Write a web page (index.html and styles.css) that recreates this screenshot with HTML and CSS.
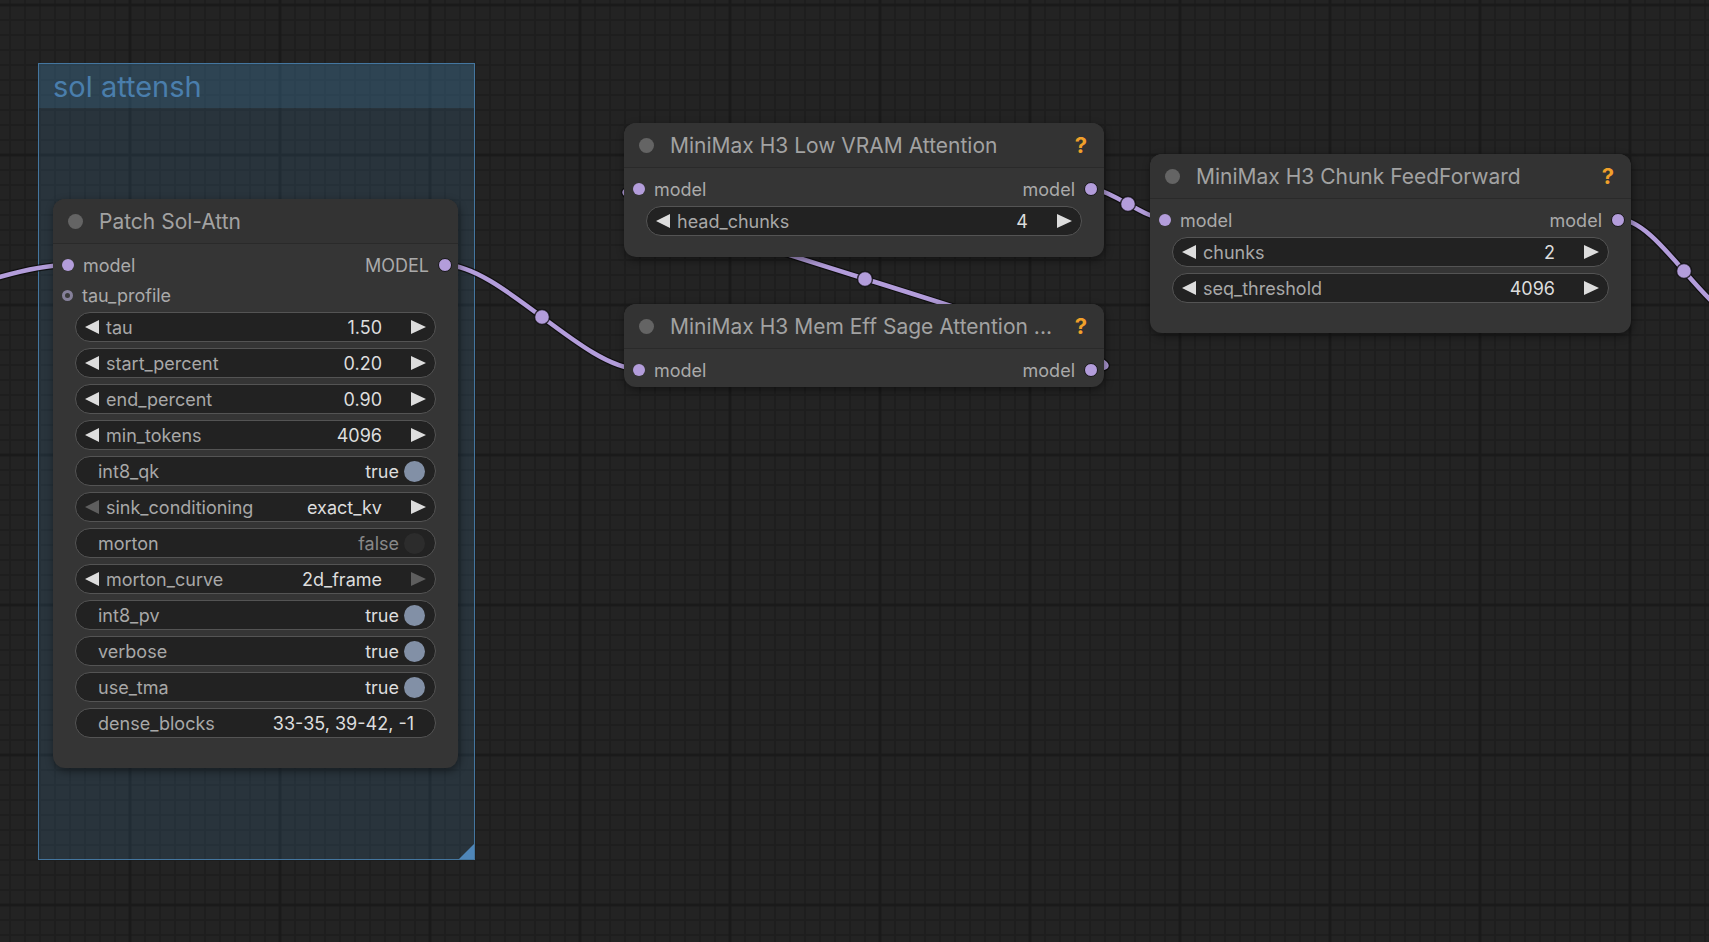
FILE: index.html
```html
<!DOCTYPE html>
<html lang="en">
<head>
<meta charset="utf-8">
<title>Graph canvas</title>
<link rel="stylesheet" href="styles.css">
</head>
<body>
<div class="canvas">
  <div class="group g-sol">
    <div class="group-title">sol attensh</div>
    <div class="group-resize"></div>
  </div>

  <svg class="links" width="1709" height="942" viewBox="0 0 1709 942">
    <g class="link-border">
      <path d="M -250 350 C -168 350, -14 265, 68 265"/>
      <path d="M 445 265 C 500 265, 584 369, 639 369"/>
      <path d="M 1092 369 C 1214 369, 517 189, 639 189"/>
      <path d="M 1091 189 C 1111 189, 1145 219, 1165 219"/>
      <path d="M 1618 219 C 1660 219, 1708 323, 1750 323"/>
    </g>
    <g class="link-line">
      <path d="M -250 350 C -168 350, -14 265, 68 265"/>
      <path d="M 445 265 C 500 265, 584 369, 639 369"/>
      <path d="M 1092 369 C 1214 369, 517 189, 639 189"/>
      <path d="M 1091 189 C 1111 189, 1145 219, 1165 219"/>
      <path d="M 1618 219 C 1660 219, 1708 323, 1750 323"/>
    </g>
    <g class="link-mid">
      <circle cx="542" cy="317" r="7.5"/>
      <circle cx="865" cy="279" r="7.5"/>
      <circle cx="1128" cy="204" r="7.5"/>
      <circle cx="1684" cy="271" r="7.5"/>
    </g>
  </svg>

  <!-- Patch Sol-Attn -->
  <div class="node n-patch">
    <div class="title"><span class="tdot"></span><span class="ttext">Patch Sol-Attn</span></div>
    <div class="body">
      <div class="slot-row">
        <div class="in"><span class="sdot"></span><span class="slabel">model</span></div>
        <div class="out"><span class="slabel">MODEL</span><span class="sdot sdot-out"></span></div>
      </div>
      <div class="slot-row">
        <div class="in"><span class="sdot sdot-opt"></span><span class="slabel">tau_profile</span></div>
      </div>
      <div class="widgets">
        <div class="w w-num"><span class="arr arr-l"></span><span class="w-label">tau</span><span class="w-val">1.50</span><span class="arr arr-r"></span></div>
        <div class="w w-num"><span class="arr arr-l"></span><span class="w-label">start_percent</span><span class="w-val">0.20</span><span class="arr arr-r"></span></div>
        <div class="w w-num"><span class="arr arr-l"></span><span class="w-label">end_percent</span><span class="w-val">0.90</span><span class="arr arr-r"></span></div>
        <div class="w w-num"><span class="arr arr-l"></span><span class="w-label">min_tokens</span><span class="w-val">4096</span><span class="arr arr-r"></span></div>
        <div class="w w-tog"><span class="w-label">int8_qk</span><span class="w-val">true</span><span class="knob on"></span></div>
        <div class="w w-num"><span class="arr arr-l dim"></span><span class="w-label">sink_conditioning</span><span class="w-val">exact_kv</span><span class="arr arr-r"></span></div>
        <div class="w w-tog"><span class="w-label">morton</span><span class="w-val off">false</span><span class="knob"></span></div>
        <div class="w w-num"><span class="arr arr-l"></span><span class="w-label">morton_curve</span><span class="w-val">2d_frame</span><span class="arr arr-r dim"></span></div>
        <div class="w w-tog"><span class="w-label">int8_pv</span><span class="w-val">true</span><span class="knob on"></span></div>
        <div class="w w-tog"><span class="w-label">verbose</span><span class="w-val">true</span><span class="knob on"></span></div>
        <div class="w w-tog"><span class="w-label">use_tma</span><span class="w-val">true</span><span class="knob on"></span></div>
        <div class="w w-text"><span class="w-label">dense_blocks</span><span class="w-val">33-35, 39-42, -1</span></div>
      </div>
    </div>
  </div>

  <!-- Low VRAM -->
  <div class="node n-lowvram">
    <div class="title"><span class="tdot"></span><span class="ttext">MiniMax H3 Low VRAM Attention</span><span class="help">?</span></div>
    <div class="body">
      <div class="slot-row">
        <div class="in"><span class="sdot"></span><span class="slabel">model</span></div>
        <div class="out"><span class="slabel">model</span><span class="sdot sdot-out"></span></div>
      </div>
      <div class="widgets">
        <div class="w w-num"><span class="arr arr-l"></span><span class="w-label">head_chunks</span><span class="w-val">4</span><span class="arr arr-r"></span></div>
      </div>
    </div>
  </div>

  <!-- Mem Eff -->
  <div class="node n-memeff">
    <div class="title"><span class="tdot"></span><span class="ttext">MiniMax H3 Mem Eff Sage Attention ...</span><span class="help">?</span></div>
    <div class="body">
      <div class="slot-row">
        <div class="in"><span class="sdot"></span><span class="slabel">model</span></div>
        <div class="out"><span class="slabel">model</span><span class="sdot sdot-out"></span></div>
      </div>
    </div>
  </div>

  <!-- Chunk FeedForward -->
  <div class="node n-chunk">
    <div class="title"><span class="tdot"></span><span class="ttext">MiniMax H3 Chunk FeedForward</span><span class="help">?</span></div>
    <div class="body">
      <div class="slot-row">
        <div class="in"><span class="sdot"></span><span class="slabel">model</span></div>
        <div class="out"><span class="slabel">model</span><span class="sdot sdot-out"></span></div>
      </div>
      <div class="widgets">
        <div class="w w-num"><span class="arr arr-l"></span><span class="w-label">chunks</span><span class="w-val">2</span><span class="arr arr-r"></span></div>
        <div class="w w-num"><span class="arr arr-l"></span><span class="w-label">seq_threshold</span><span class="w-val">4096</span><span class="arr arr-r"></span></div>
      </div>
    </div>
  </div>
</div>
</body>
</html>
```

FILE: styles.css
```css
html, body {
  margin: 0;
  padding: 0;
  background: #222222;
}

.canvas {
  position: relative;
  width: 1709px;
  height: 942px;
  overflow: hidden;
  font-family: Inter, "Noto Sans", "Liberation Sans", sans-serif;
  background-color: #232323;
  background-image:
    linear-gradient(to right, #1a1a1a 3px, transparent 3px),
    linear-gradient(to bottom, #1a1a1a 3px, transparent 3px),
    linear-gradient(to right, #1e1e1e 2px, transparent 2px),
    linear-gradient(to bottom, #1e1e1e 2px, transparent 2px);
  background-size: 150px 150px, 150px 150px, 15px 15px, 15px 15px;
  background-position: 128.5px 0, 0 3.5px, 9px 0, 0 4px;
}

/* ---------- group ---------- */
.group {
  position: absolute;
  box-sizing: border-box;
  border: 1.5px solid #44769f;
  background: rgba(63, 120, 158, 0.2);
}
.g-sol {
  left: 38px;
  top: 63px;
  width: 437px;
  height: 797px;
}
.group-title {
  height: 44px;
  box-sizing: border-box;
  padding-left: 14px;
  display: flex;
  align-items: center;
  background: rgba(63, 120, 158, 0.24);
  color: #4a7eac;
  font-size: 29px;
  line-height: 1;
}
.group-resize {
  position: absolute;
  right: 0;
  bottom: 0;
  width: 0;
  height: 0;
  border-left: 15px solid transparent;
  border-bottom: 15px solid #4f86b8;
}

/* ---------- links ---------- */
.links {
  position: absolute;
  left: 0;
  top: 0;
}
.link-border path {
  fill: none;
  stroke: rgba(10, 10, 10, 0.75);
  stroke-width: 7;
}
.link-line path {
  fill: none;
  stroke: #b39ddb;
  stroke-width: 4.5;
}
.link-mid circle {
  fill: #b39ddb;
  stroke: rgba(10, 10, 10, 0.75);
  stroke-width: 1.5;
}

/* ---------- nodes ---------- */
.node {
  position: absolute;
  box-sizing: border-box;
  background: #353535;
  border-radius: 12px;
  box-shadow: 1px 3px 8px rgba(0, 0, 0, 0.45);
  color: #aaaaaa;
}
.n-patch { left: 53px; top: 199px; width: 405px; height: 569px; }
.n-lowvram { left: 624px; top: 123px; width: 480px; height: 134px; }
.n-memeff { left: 624px; top: 304px; width: 480px; height: 83px; }
.n-chunk { left: 1150px; top: 154px; width: 481px; height: 179px; }

.title {
  height: 45px;
  box-sizing: border-box;
  display: flex;
  align-items: center;
  padding: 0 17px 0 15px;
  background: #333333;
  border-bottom: 1.5px solid #2a2a2a;
  border-radius: 12px 12px 0 0;
}
.tdot {
  width: 15px;
  height: 15px;
  border-radius: 50%;
  background: #646464;
  flex: none;
}
.ttext {
  margin-left: 16px;
  font-size: 21px;
  color: #a2a2a2;
  white-space: nowrap;
  flex: 1;
}
.help {
  color: #f0a02a;
  font-size: 22px;
  font-weight: 700;
  margin-left: 8px;
}

.body {
  padding-top: 6px;
}
.slot-row {
  height: 30px;
  display: flex;
  align-items: center;
  justify-content: space-between;
  font-size: 18px;
}
.in, .out {
  display: flex;
  align-items: center;
}
.in {
  padding-left: 9px;
}
.in .slabel {
  margin-left: 9px;
}
.out {
  padding-right: 6px;
}
.out .slabel {
  margin-right: 9px;
}
.slabel {
  color: #aaaaaa;
}
.sdot {
  width: 12px;
  height: 12px;
  border-radius: 50%;
  background: #b39ddb;
  box-sizing: border-box;
}
.sdot-out {
  width: 14px;
  height: 14px;
  border: 1.5px solid #161616;
}
.sdot-opt {
  width: 11px;
  height: 11px;
  background: #3a3a3a;
  border: 3px solid #85809a;
}

/* ---------- widgets ---------- */
.widgets {
  margin: 2px 22px 0;
  display: flex;
  flex-direction: column;
  gap: 6px;
}
.w {
  height: 30px;
  box-sizing: border-box;
  border: 1px solid #545454;
  border-radius: 15px;
  background: #222222;
  display: flex;
  align-items: center;
  font-size: 18px;
  white-space: nowrap;
}
.w-label {
  color: #a8a8a8;
}
.w-val {
  margin-left: auto;
  color: #dddddd;
}
.w-val.off {
  color: #888888;
}

.w-num {
  padding: 0 9px 0 9px;
}
.w-num .w-label {
  margin-left: 7px;
}
.w-num .arr-r {
  margin-left: 29px;
}
.arr {
  width: 0;
  height: 0;
  border-top: 7.5px solid transparent;
  border-bottom: 7.5px solid transparent;
  flex: none;
}
.arr-l {
  border-right: 14px solid #dddddd;
}
.arr-r {
  border-left: 15px solid #dddddd;
}
.arr-l.dim {
  border-right-color: #5e5e5e;
}
.arr-r.dim {
  border-left-color: #5e5e5e;
}

.w-tog {
  padding: 0 10px 0 22px;
}
.knob {
  width: 21px;
  height: 21px;
  border-radius: 50%;
  background: #2c2c2c;
  margin-left: 5px;
  flex: none;
}
.knob.on {
  background: #8290a6;
}

.w-text {
  padding: 0 21px 0 22px;
}
```
